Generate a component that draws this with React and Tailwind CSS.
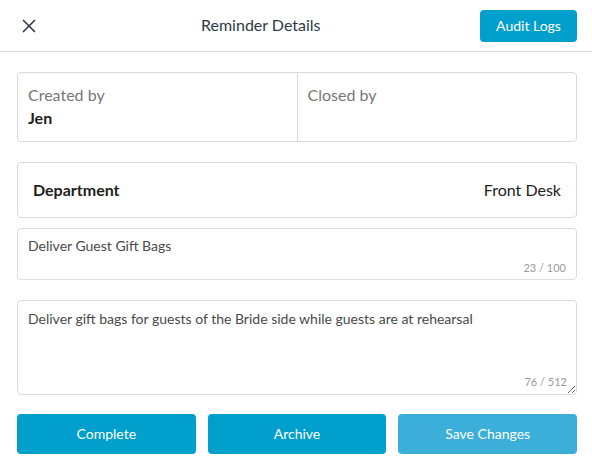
import { X } from "lucide-react";

export default function App() {
  return (
    <div className="w-[592px] h-[470px] bg-white font-['Lato','Liberation_Sans',sans-serif] text-[#212121]">
      <header className="h-[52px] border-b border-[#d6d6d6] flex items-center pl-[17px] pr-[15px]">
        <button className="w-6 h-6 flex items-center justify-center text-[#2f3d4b]">
          <X size={22} strokeWidth={1.8} />
        </button>
        <h1 className="text-[16px] text-[#2e3a46] ml-[160px] -mt-px">Reminder Details</h1>
        <div className="flex-1" />
        <button className="w-[97px] h-[32px] rounded bg-[#009fcc] text-white text-[14px]">
          Audit Logs
        </button>
      </header>

      <main className="pl-[17px] pr-[15px] pt-5">
        <div className="h-[70px] border border-[#d9d9d9] rounded flex">
          <div className="flex-1 border-r border-[#d9d9d9] px-[10px] pt-[12px]">
            <div className="text-[16px] text-[#777] leading-5">Created by</div>
            <div className="text-[16px] font-bold leading-5 mt-[3px]">Jen</div>
          </div>
          <div className="flex-1 px-[10px] pt-[12px]">
            <div className="text-[16px] text-[#777] leading-5">Closed by</div>
          </div>
        </div>

        <div className="h-[56px] mt-5 border border-[#d9d9d9] rounded flex items-center justify-between px-[15px]">
          <span className="text-[16px] font-bold">Department</span>
          <span className="text-[16px]">Front Desk</span>
        </div>

        <div className="relative h-[52px] mt-[10px] border border-[#dcdcdc] rounded px-[10px] pt-[6px]">
          <div className="text-[14px] text-[#4a4a4a]">Deliver Guest Gift Bags</div>
          <span className="absolute right-[10px] bottom-[3px] text-[11px] text-[#9a9a9a]">23 / 100</span>
        </div>

        <div className="relative mt-5">
          <textarea
            readOnly
            defaultValue="Deliver gift bags for guests of the Bride side while guests are at rehearsal"
            className="block w-full h-[95px] border border-[#dcdcdc] rounded px-[10px] pt-[7px] text-[14px] text-[#4a4a4a] outline-none resize-y"
          />
          <span className="absolute right-[10px] bottom-[5px] text-[11px] text-[#9a9a9a]">76 / 512</span>
        </div>

        <div className="grid grid-cols-3 gap-3 mt-[19px]">
          <button className="h-10 rounded bg-[#009fcc] text-white text-[14px] pb-px">Complete</button>
          <button className="h-10 rounded bg-[#009fcc] text-white text-[14px] pb-px">Archive</button>
          <button className="h-10 rounded bg-[#3bafda] text-white text-[14px] pb-px">Save Changes</button>
        </div>
      </main>
    </div>
  );
}
